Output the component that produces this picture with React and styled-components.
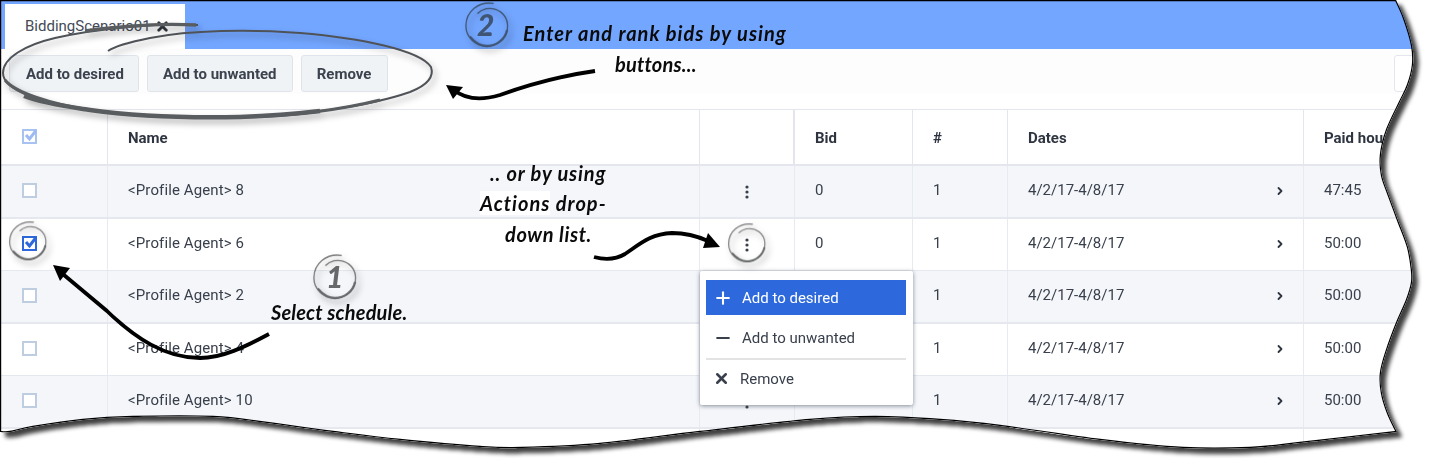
import React from 'react';
import styled, { createGlobalStyle } from 'styled-components';
import { ChevronRight, Plus, Minus, X } from 'lucide-react';

const smooth = (pts) => {
  let d = '';
  for (let i = 0; i < pts.length - 1; i++) {
    const p0 = pts[i - 1] || pts[i];
    const p1 = pts[i];
    const p2 = pts[i + 1];
    const p3 = pts[i + 2] || p2;
    const c1x = p1[0] + (p2[0] - p0[0]) / 6;
    const c1y = p1[1] + (p2[1] - p0[1]) / 6;
    const c2x = p2[0] - (p3[0] - p1[0]) / 6;
    const c2y = p2[1] - (p3[1] - p1[1]) / 6;
    d += ` C${c1x.toFixed(1)} ${c1y.toFixed(1)} ${c2x.toFixed(1)} ${c2y.toFixed(1)} ${p2[0]} ${p2[1]}`;
  }
  return d;
};

const rightEdge = [
  [1396, 0], [1404, 18], [1412, 45], [1413, 65], [1408, 85], [1400, 102], [1387, 130], [1381, 155],
  [1382, 175], [1388, 193], [1398, 220], [1408, 247], [1412, 270], [1412, 283], [1407, 300],
  [1397, 323], [1387, 350], [1381, 373], [1382, 393], [1388, 413], [1397, 432],
];
const bottomEdge = [
  [1397, 432], [1300, 443], [1250, 448], [1183, 448], [1100, 440], [1000, 426], [940, 420], [875, 417],
  [810, 420], [700, 432], [600, 444], [522, 448], [480, 447], [400, 440], [333, 432], [267, 423],
  [213, 417], [133, 417], [83, 420], [33, 427], [10, 432], [0, 432],
];
const tornEdge = `M0 0 L1396 0${smooth(rightEdge)}${smooth(bottomEdge)} Z`;

// the menu hides the bid of the lower three rows
const rows = [
  { name: '<Profile Agent> 8', hours: '47:45', bid: '0' },
  { name: '<Profile Agent> 6', hours: '50:00', bid: '0', checked: true },
  { name: '<Profile Agent> 2', hours: '50:00' },
  { name: '<Profile Agent> 4', hours: '50:00' },
  { name: '<Profile Agent> 10', hours: '50:00' },
];

const App = () => (
  <>
    <GlobalStyle />
    <Stage>
      <Sheet>
        <TabBar>
          <Tab>
            BiddingScenario01
            <CloseMark size={15} strokeWidth={4.5} />
          </Tab>
        </TabBar>
        <Toolbar>
          <ToolButton>Add to desired</ToolButton>
          <ToolButton>Add to unwanted</ToolButton>
          <ToolButton>Remove</ToolButton>
          <EdgeButton />
        </Toolbar>
        <HeaderRow>
          <HeaderCell>
            <Box $tone="header" />
          </HeaderCell>
          <HeaderCell>Name</HeaderCell>
          <HeaderCell />
          <HeaderCell>Bid</HeaderCell>
          <HeaderCell>#</HeaderCell>
          <HeaderCell>Dates</HeaderCell>
          <HeaderCell>Paid hours</HeaderCell>
        </HeaderRow>
        {rows.map((row) => (
          <Row key={row.name}>
            <Cell>
              <Box $tone={row.checked ? 'checked' : 'empty'} />
            </Cell>
            <NameCell>{row.name}</NameCell>
            <ActionCell>
              <Kebab />
            </ActionCell>
            <Cell>{row.bid}</Cell>
            <Cell>1</Cell>
            <DatesCell>
              4/2/17-4/8/17
              <ChevronRight size={12} strokeWidth={3.6} />
            </DatesCell>
            <Cell>{row.hours}</Cell>
          </Row>
        ))}
        <TailRow>
          <Cell />
          <Cell />
          <Cell />
          <Cell />
          <Cell />
          <Cell />
          <Cell />
        </TailRow>

        <Menu>
          <MenuItem $active>
            <Plus size={20} strokeWidth={2.5} />
            Add to desired
          </MenuItem>
          <MenuItem>
            <Minus size={20} strokeWidth={2.5} />
            Add to unwanted
          </MenuItem>
          <MenuDivider />
          <MenuItem $gap={10} $lift>
            <X size={17} strokeWidth={3.6} />
            Remove
          </MenuItem>
        </Menu>

        <Scribbles viewBox="0 0 1429 465">
          <g className="soft">
            <path
              d="M198 25 C160 23 100 28 55 38 C25 45 3 58 3 73 C3 90 40 103 90 110 C140 117 190 118 240 117 C300 116 370 106 410 92 C428 85 434 76 431 67 C420 50 360 38 300 33 C250 29 190 30 150 38 C130 42 115 46 108 51"
              fill="none"
              stroke="#4f5358"
              strokeWidth="2"
            />
            <path
              d="M196 25 C160 23 120 26 85 31"
              fill="none"
              stroke="#5a5d60"
              strokeWidth="3.4"
            />
            <path
              d="M5 80 C14 92 50 104 90 110 C140 117 190 118 240 117 C290 116 340 110 380 100"
              fill="none"
              stroke="#5a5d60"
              strokeWidth="3"
            />
            <path
              d="M24 96 C45 104 70 107 90 110 C140 117 190 118 240 117 C270 116 295 114 320 111"
              fill="none"
              stroke="#5a5d60"
              strokeWidth="4.4"
            />
            <Ring x={8} y={221} size={40} />
            <Ring x={727} y={223} size={40} />
            <Ring x={312} y={254} size={46} />
            <Ring x={464} y={2} size={46} dark />
          </g>
          <path d="M595 71 C560 76 525 86 500 95 C480 101 465 99 454 90" fill="none" stroke="#000" strokeWidth="3.8" />
          <path d="M446 85 L463 87 L453 99 Z" fill="#000" />
          <path d="M269 334 C245 347 222 358 200 358 C165 358 135 338 107 311 L64 275" fill="none" stroke="#000" strokeWidth="3.8" />
          <path d="M53 265 L70 268 L60 281 Z" fill="#000" />
          <path d="M594 257 C605 260 615 260 625 254 C640 244 650 234 672 233 C685 233 697 236 708 241" fill="none" stroke="#000" strokeWidth="3.8" />
          <path d="M720 247 L708 233 L703 248 Z" fill="#000" />
        </Scribbles>

        <Note $x={523} $y={21} $track={1}>Enter and rank bids by using</Note>
        <Note $x={615} $y={52} $track={0.2}>buttons...</Note>
        <Note $x={490} $y={161} $track={0.85}>.. or by using</Note>
        <Note $x={480} $y={191} $track={1}>
          <Patch>Actions</Patch> drop-
        </Note>
        <Note $x={505} $y={222} $track={0.6}>down list.</Note>
        <Note $x={271} $y={300} $track={0.15}>Select schedule.</Note>
        <Digit $x={326} $y={259}>1</Digit>
        <Digit $x={477} $y={7} $dark>2</Digit>

        <Outline viewBox="0 0 1429 465">
          <path d={tornEdge} fill="none" stroke="#000" strokeWidth="2.4" />
        </Outline>
      </Sheet>
    </Stage>
  </>
);

const Ring = ({ x, y, size, dark }) => (
  <svg x={x} y={y} width={size} height={size} viewBox="0 0 48 48" overflow="visible">
    <path
      d="M31 1.5 C15 -1 2 10 2 25 C2 37 12 46 24 46 C36 46 46 36 45.5 24 C45 13 35 5 23 7 C19 8 16 10 14 12"
      fill="none"
      stroke={dark ? '#3f5573' : '#77797b'}
      strokeWidth="1.4"
    />
    <path
      d="M6 36 C12 43 18 46 24 46 C34 46 43 39 45 29"
      fill="none"
      stroke={dark ? '#3f5573' : '#66686a'}
      strokeWidth="2.4"
    />
  </svg>
);

const Box = ({ $tone }) => (
  <BoxFrame $tone={$tone}>
    {$tone !== 'empty' && (
      <svg width="15" height="15" viewBox="0 0 15 15">
        <path d="M3 7 L6.5 11 L13 2.5" fill="none" stroke="currentColor" strokeWidth="3" />
      </svg>
    )}
  </BoxFrame>
);

const Kebab = () => (
  <svg width="4" height="14" viewBox="0 0 4 14">
    <circle cx="2" cy="2" r="1.6" fill="#39404c" />
    <circle cx="2" cy="7" r="1.6" fill="#39404c" />
    <circle cx="2" cy="12" r="1.6" fill="#39404c" />
  </svg>
);

const GlobalStyle = createGlobalStyle`
  html, body {
    margin: 0;
    padding: 0;
    background: #fff;
  }
  body {
    font-family: Roboto, "Liberation Sans", sans-serif;
    font-size: 15px;
    color: #39404c;
  }
  * {
    box-sizing: border-box;
  }
`;

const Stage = styled.div`
  width: 1429px;
  height: 465px;
  overflow: hidden;
  filter: drop-shadow(5px 5px 2px rgba(0, 0, 0, 0.75));
`;

const Sheet = styled.div`
  position: relative;
  width: 1429px;
  height: 465px;
  overflow: hidden;
  background: #fff;
  clip-path: path('${tornEdge}');
`;

const TabBar = styled.div`
  display: flex;
  align-items: flex-end;
  height: 49px;
  padding-left: 5px;
  background: #73a6ff;
`;

const Tab = styled.div`
  display: flex;
  align-items: center;
  gap: 4px;
  width: 180px;
  height: 45px;
  padding: 0 0 1px 20px;
  background: #fff;
  color: #444b57;
  white-space: nowrap;
`;

const CloseMark = styled(X)`
  flex: none;
  color: #33383f;
`;

const Toolbar = styled.div`
  display: flex;
  align-items: flex-start;
  gap: 8px;
  width: 1454px;
  height: 61px;
  padding: 6px 0 0 9px;
  background: linear-gradient(#fdfdfd 0, #fdfdfd 45px, #fff 45px);
  border-bottom: 1px solid #e3e6ec;
`;

const ToolButton = styled.div`
  display: flex;
  align-items: center;
  justify-content: center;
  height: 37px;
  min-width: 87px;
  padding: 0 14px 0 16px;
  background: #f0f3f6;
  border: 1px solid #dfe4ea;
  border-radius: 3px;
  color: #3c434f;
  font-weight: 700;
  white-space: nowrap;

  & + & {
    padding: 0 15px;
  }
`;

const EdgeButton = styled.div`
  width: 60px;
  height: 37px;
  margin-left: auto;
  border: 1px solid #e3e6ec;
  border-radius: 3px;
  background: #fff;
`;

const columns = '108px 592px 95px 118px 95px 296px 125px';

const HeaderRow = styled.div`
  display: grid;
  grid-template-columns: ${columns};
  height: 56px;
  background: #fff;
  border-bottom: 2px solid #e3e6ec;
`;

const HeaderCell = styled.div`
  display: flex;
  align-items: center;
  padding: 2px 0 0 20px;
  white-space: nowrap;
  border-right: 1px solid #e3e6ec;
  color: #2f3540;
  font-weight: 700;

  &:nth-child(3) {
    border-right-width: 2px;
  }
`;

const Row = styled.div`
  display: grid;
  grid-template-columns: ${columns};
  height: 52.5px;
  border-bottom: 1px solid #e5e8ee;

  &:nth-of-type(odd) {
    background: #fff;
  }
  &:nth-of-type(even) {
    background: #f4f6fa;
    border-bottom-width: 2px;
  }
`;

const TailRow = styled(Row)`
  height: 40px;
  border: 0;
  background: #fff !important;
`;

const Cell = styled.div`
  display: flex;
  align-items: center;
  padding: 0 0 2px 20px;
  white-space: nowrap;
  border-right: 1px solid #e7eaef;
`;

const NameCell = styled(Cell)`
  letter-spacing: 0.12px;
`;

const ActionCell = styled(Cell)`
  justify-content: center;
  padding: 2px 1px 0 0;
`;

const DatesCell = styled(Cell)`
  justify-content: space-between;
  padding-right: 17px;

  svg {
    color: #2f3540;
    margin-top: 2px;
  }
`;

const boxTones = {
  empty: { border: '#bfcde1', mark: 'transparent', shift: 0 },
  checked: { border: '#2d69dc', mark: '#2d69dc', shift: 0 },
  header: { border: '#a8c2f2', mark: '#9dbbf2', shift: -4 },
};

const BoxFrame = styled.div`
  width: 15px;
  height: 15px;
  margin: ${(p) => boxTones[p.$tone].shift}px 0 0 2px;
  background: #fff;
  border: 2px solid ${(p) => boxTones[p.$tone].border};
  color: ${(p) => boxTones[p.$tone].mark};
  position: relative;

  svg {
    position: absolute;
    left: -1px;
    top: -3px;
  }
`;

const Menu = styled.div`
  position: absolute;
  left: 700px;
  top: 271px;
  width: 213px;
  height: 134px;
  padding: 9px 7px 0 6px;
  background: #fff;
  border-radius: 2px;
  box-shadow: 0 1px 4px rgba(40, 50, 70, 0.55);
`;

const MenuItem = styled.div`
  display: flex;
  align-items: center;
  gap: ${(p) => p.$gap || 9}px;
  height: ${(p) => (p.$active ? 35 : 40)}px;
  margin-bottom: ${(p) => (p.$active ? 3 : 0)}px;
  padding: 0 0 ${(p) => (p.$lift ? 2 : 0)}px 7px;
  background: ${(p) => (p.$active ? '#2d69dc' : 'transparent')};
  color: ${(p) => (p.$active ? '#fff' : '#39404c')};
`;

const MenuDivider = styled.div`
  height: 1.5px;
  background: #e3e3e3;
`;

const Scribbles = styled.svg`
  position: absolute;
  inset: 0;
  width: 1429px;
  height: 465px;
  pointer-events: none;

  .soft {
    filter: drop-shadow(3px 4px 3px rgba(0, 0, 0, 0.32));
  }
`;

const Outline = styled.svg`
  position: absolute;
  inset: 0;
  width: 1429px;
  height: 465px;
  pointer-events: none;
`;

const Note = styled.div`
  position: absolute;
  left: ${(p) => p.$x}px;
  top: ${(p) => p.$y}px;
  font-family: Lato, "Open Sans", sans-serif;
  font-style: italic;
  font-weight: 700;
  font-size: 20px;
  line-height: 24px;
  letter-spacing: ${(p) => p.$track}px;
  white-space: nowrap;
  color: #0b0b0b;
`;

const Patch = styled.span`
  background: #fff;
`;

const Digit = styled.div`
  position: absolute;
  left: ${(p) => p.$x}px;
  top: ${(p) => p.$y}px;
  font-family: Lato, "Open Sans", sans-serif;
  font-style: italic;
  font-weight: 900;
  font-size: 30px;
  line-height: 34px;
  color: ${(p) => (p.$dark ? '#3f5573' : '#66686a')};
`;

export default App;
